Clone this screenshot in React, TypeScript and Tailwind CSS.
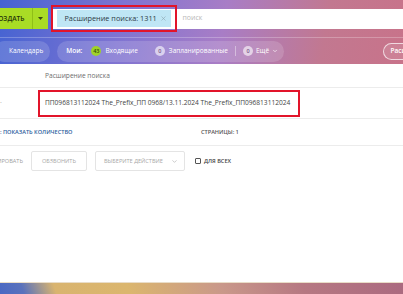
import { ChevronDown, X } from "lucide-react";

const font = { fontFamily: '"Open Sans", "Noto Sans", sans-serif' };

function Badge({ n, green }: { n: string; green?: boolean }) {
  return (
    <span
      className={`flex h-[10px] w-[10px] shrink-0 items-center justify-center rounded-full text-[5.5px] font-semibold ${
        green ? "bg-[#9fd22a] text-[#2f4a05]" : "bg-white/60 text-[#7a5d8c]"
      }`}
    >
      {n}
    </span>
  );
}

export default function App() {
  return (
    <div className="flex h-[294px] w-[403px] flex-col overflow-hidden bg-white" style={font}>
      {/* шапка с градиентом */}
      <div className="flex h-[64px] shrink-0 flex-col bg-[linear-gradient(100deg,#4563d2_0%,#7f74d2_30%,#a87dc6_55%,#c27890_80%,#c8738a_100%)]">
        <div className="flex h-[37px] items-center">
          <div className="-ml-[14px] flex h-[21px] items-center bg-[#a9dc25] text-[#26330a]">
            <span className="whitespace-nowrap px-[8px] text-[6.6px] font-semibold">СОЗДАТЬ</span>
            <span className="h-full w-px bg-[#8fbf17]" />
            <span className="flex w-[15px] items-center justify-center">
              <svg width="5" height="3" viewBox="0 0 5 3">
                <path d="M0 0h5L2.5 3z" fill="#3a4a12" />
              </svg>
            </span>
          </div>
          <div className="ml-[5px] flex h-[20px] flex-1 items-center bg-white">
            <div className="-ml-[2px] flex h-[27px] items-center border-2 border-[#e2142a] px-[4px]">
              <div className="flex h-[17px] w-[114px] items-center justify-between whitespace-nowrap bg-[#bfe6f5] pl-[7px] pr-[4px] text-[7.3px] text-[#2c3a44]">
                <span>Расширение поиска: 1311</span>
                <X size={7} strokeWidth={2} className="text-[#8aa3ae]" />
              </div>
            </div>
            <span className="ml-[5px] text-[7px] text-[#b9b9b9]">поиск</span>
          </div>
        </div>
        <div className="flex h-[27px] items-center whitespace-nowrap border-t border-white/25 text-[6.5px] text-white">
          <div className="-ml-[6px] flex h-[21px] items-center rounded-full bg-white/15 pl-[15px] pr-[7px]">
            Календарь
          </div>
          <div className="ml-[7px] flex h-[21px] items-center rounded-full bg-white/15 pl-[9px] pr-[6px]">
            <span className="mr-[9px] font-semibold">Мои:</span>
            <Badge n="43" green />
            <span className="ml-[4px] mr-[17px]">Входящие</span>
            <Badge n="0" />
            <span className="ml-[4px]">Запланированные</span>
            <span className="mx-[7px] h-[10px] w-px bg-white/40" />
            <Badge n="0" />
            <span className="ml-[3px] flex items-center gap-[3px]">
              Ещё
              <ChevronDown size={6} strokeWidth={2.5} />
            </span>
          </div>
          <div className="ml-auto -mr-[36px] flex h-[17px] items-center rounded-full border border-white/70 bg-white/10 px-[6px] font-semibold">
            Расширение
          </div>
        </div>
      </div>

      {/* таблица */}
      <div className="flex flex-1 flex-col whitespace-nowrap text-[#4a4a4a]">
        <div className="flex h-[24px] items-center border-b border-[#ececec] pl-[45px] text-[6.6px] text-[#6d6d6d]">
          Расширение поиска
        </div>
        <div className="flex h-[31px] items-center border-b border-[#ececec]">
          <span className="w-[38px] text-[7px] text-[#999]">·</span>
          <div className="flex h-[27px] items-center border-2 border-[#e2142a] pl-[5px] pr-[8px] text-[6.6px] text-[#444]">
            ПП096813112024 The_Prefix_ПП 0968/13.11.2024 The_Prefix_ПП096813112024
          </div>
        </div>
        <div className="flex h-[27px] items-center border-b border-[#ececec] text-[5.6px] font-semibold">
          <span className="w-[201px] text-[#2b5d9c]">: ПОКАЗАТЬ КОЛИЧЕСТВО</span>
          <span className="text-[#555]">СТРАНИЦЫ: 1</span>
        </div>
        <div className="flex h-[30px] items-center text-[5.6px]">
          <div className="flex w-[23px] justify-end">
            <span className="text-[#a0a0a0]">ПРОТЕСТИРОВАТЬ</span>
          </div>
          <div className="ml-[8px] flex h-[20px] w-[56px] items-center justify-center rounded-[2px] border border-[#e4e4e4] text-[#a8a8a8]">
            ОБЗВОНИТЬ
          </div>
          <div className="ml-[8px] flex h-[20px] w-[90px] items-center justify-between rounded-[2px] border border-[#e4e4e4] pl-[8px] pr-[6px] text-[#a8a8a8]">
            ВЫБЕРИТЕ ДЕЙСТВИЕ
            <ChevronDown size={7} strokeWidth={2} />
          </div>
          <span className="ml-[10px] h-[6px] w-[6px] rounded-[1px] border border-[#555]" />
          <span className="ml-[3px] font-semibold text-[#444]">ДЛЯ ВСЕХ</span>
        </div>
      </div>

      {/* нижняя полоса */}
      <div className="h-[12px] shrink-0 border-t border-[#e9ddc8] bg-[linear-gradient(70deg,#4a68c4_0%,#5a72bc_6%,#d9b46f_14%,#dbb66e_32%,#c9988a_55%,#b67882_75%,#ab6a80_100%)]" />
    </div>
  );
}
